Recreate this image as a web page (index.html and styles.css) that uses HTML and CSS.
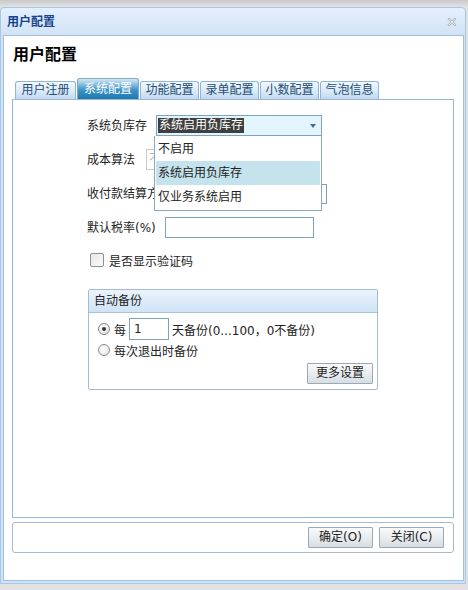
FILE: index.html
```html
<!DOCTYPE html>
<html lang="zh-CN">
<head>
<meta charset="utf-8">
<title>用户配置</title>
<link rel="stylesheet" href="styles.css">
</head>
<body>
<div class="window">
  <div class="titlebar">
    <span class="title">用户配置</span>
    <svg class="close" width="10" height="10" viewBox="0 0 10 10">
      <path d="M1 2.2 L2.2 1 L5 3.8 L7.8 1 L9 2.2 L6.2 5 L9 7.8 L7.8 9 L5 6.2 L2.2 9 L1 7.8 L3.8 5 Z" fill="#e4e8ec" stroke="#9aa3ab" stroke-width="0.8" stroke-linejoin="round"/>
    </svg>
  </div>
  <div class="body">
    <h1 class="heading">用户配置</h1>
    <div class="tabs">
      <div class="tab">用户注册</div>
      <div class="tab active">系统配置</div>
      <div class="tab">功能配置</div>
      <div class="tab">录单配置</div>
      <div class="tab">小数配置</div>
      <div class="tab">气泡信息</div>
    </div>
    <div class="panel">
      <div class="row r1">
        <span class="lbl">系统负库存</span>
        <div class="select">
          <span class="sel-text">系统启用负库存</span>
          <span class="arrow"></span>
          <div class="dropdown">
            <div class="opt">不启用</div>
            <div class="opt hl">系统启用负库存</div>
            <div class="opt">仅业务系统启用</div>
          </div>
        </div>
      </div>
      <div class="row r2">
        <span class="lbl">成本算法</span>
        <div class="input disabled">不启用</div>
      </div>
      <div class="row r3">
        <span class="lbl">收付款结算方式</span>
        <div class="input wide3"></div>
      </div>
      <div class="row r4">
        <span class="lbl">默认税率(%)</span>
        <div class="input tax"></div>
      </div>
      <div class="check-row">
        <span class="checkbox"></span>
        <span>是否显示验证码</span>
      </div>
      <div class="fieldset">
        <div class="fs-head">自动备份</div>
        <div class="fs-body">
          <div class="radio-row">
            <span class="radio on"></span>
            <span>每</span>
            <div class="input days">1</div>
            <span>天备份(0...100，0不备份)</span>
          </div>
          <div class="radio-row">
            <span class="radio"></span>
            <span>每次退出时备份</span>
          </div>
          <div class="fs-actions">
            <button class="btn">更多设置</button>
          </div>
        </div>
      </div>
    </div>
    <div class="footer">
      <button class="btn wbtn">确定(O)</button>
      <button class="btn wbtn">关闭(C)</button>
    </div>
  </div>
</div>
</body>
</html>
```
FILE: styles.css
```css
html, body {
  margin: 0;
  padding: 0;
}
body {
  width: 468px;
  height: 590px;
  overflow: hidden;
  background: linear-gradient(#c9c9c9 0px, #e2e2e2 7px, #e2e2e2 100%);
  font-family: "DejaVu Sans", "Noto Sans CJK SC", sans-serif;
  font-size: 12px;
  color: #222;
  padding-top: 7px;
  box-sizing: border-box;
}
.window {
  width: 466px;
  height: 577px;
  box-sizing: border-box;
  border: 1px solid #a9c6e6;
  border-radius: 4px 4px 0 0;
  background: linear-gradient(#e4effc 0px, #d2e3f6 27px, #cfe1f5 100%);
  padding: 0 1px 2px 2px;
  display: flex;
  flex-direction: column;
}
.titlebar {
  height: 27px;
  flex: none;
  display: flex;
  align-items: center;
  justify-content: space-between;
  padding: 0 7px 0 4px;
}
.title {
  color: #15428b;
  font-weight: bold;
  font-size: 12px;
  line-height: 14px;
}
.close {
  display: block;
  margin-top: 1px;
}
.body {
  flex: 1;
  background: #fff;
  border: 1px solid #9fc0df;
  padding: 8px 9px 0 8px;
  display: flex;
  flex-direction: column;
}
.heading {
  margin: 0 0 12px 1px;
  font-size: 16px;
  font-weight: bold;
  line-height: 22px;
  height: 22px;
  color: #000;
}
.tabs {
  display: flex;
  align-items: flex-end;
  gap: 1px;
  height: 21px;
  margin-left: 3px;
}
.tab {
  height: 18px;
  box-sizing: border-box;
  border: 1px solid #8fb6d6;
  border-bottom: none;
  border-radius: 3px 3px 0 0;
  background: linear-gradient(#f3f8fd, #dcebf7 50%, #c2d9ee);
  color: #254e78;
  line-height: 17px;
  text-align: center;
  width: 59px;
}
.tab:nth-child(1) { width: 61px; }
.tab:nth-child(2) { width: 62px; }
.tab.active {
  height: 21px;
  line-height: 20px;
  color: #fff;
  border-color: #7fa9c9;
  background: linear-gradient(#d6e8f5 0px, #8fc0e2 5px, #3d93c8 11px, #1c78b1 100%);
}
.panel {
  position: relative;
  height: 419px;
  flex: none;
  box-sizing: border-box;
  border: 1px solid #93b9d6;
  padding: 15px 0 0 74px;
}
.row {
  display: flex;
  align-items: center;
  height: 21px;
  margin-bottom: 13px;
  white-space: nowrap;
}
.lbl {
  line-height: 16px;
}
.r1 .lbl { margin-right: 9px; }
.r2 .lbl { margin-right: 11px; }
.r3 .lbl { margin-right: 6px; }
.r4 .lbl { margin-right: 9px; }
.select {
  position: relative;
  width: 166px;
  height: 21px;
  box-sizing: border-box;
  border: 1px solid #7fa3bc;
  background: #e2f5fc;
  display: flex;
  align-items: center;
  padding-left: 1px;
}
.sel-text {
  background: #3f3f3f;
  color: #fff;
  line-height: 15px;
  padding: 0 1px;
}
.arrow {
  position: absolute;
  right: 5px;
  top: 8px;
  width: 0;
  height: 0;
  border-left: 3px solid transparent;
  border-right: 3px solid transparent;
  border-top: 4px solid #3a6ea8;
}
.dropdown {
  position: absolute;
  left: -3px;
  top: 20px;
  width: 168px;
  box-sizing: border-box;
  border: 1px solid #8aa9bf;
  border-top: none;
  background: #fff;
  padding: 1px 1px 1px 1px;
  z-index: 5;
}
.opt {
  height: 24px;
  line-height: 24px;
  padding-left: 2px;
  color: #222;
}
.opt.hl {
  background: #c4e3ed;
  border-radius: 1px;
}
.input {
  height: 21px;
  box-sizing: border-box;
  border: 1px solid #7f9db9;
  background: #fff;
  line-height: 19px;
  padding-left: 4px;
}
.input.disabled {
  width: 160px;
  border-color: #c9c9c9;
  color: #b0b0b0;
  padding-left: 2px;
}
.input.wide3 {
  width: 150px;
  height: 20px;
}
.input.tax {
  width: 149px;
  border-color: #7fa3bc;
}
.check-row {
  display: flex;
  align-items: center;
  gap: 5px;
  margin: 15px 0 0 3px;
  height: 14px;
}
.checkbox {
  width: 14px;
  height: 14px;
  box-sizing: border-box;
  border: 1px solid #8e8f8f;
  border-radius: 2px;
  background: linear-gradient(135deg, #e6e6e6, #fbfbfb);
}
.fieldset {
  margin: 22px 0 0 1px;
  width: 290px;
  height: 101px;
  box-sizing: border-box;
  border: 1px solid #a5bacd;
  border-radius: 2px;
  display: flex;
  flex-direction: column;
}
.fs-head {
  height: 22px;
  line-height: 22px;
  padding-left: 5px;
  border-bottom: 1px solid #a9c2da;
  background: linear-gradient(#eaf3fc, #d0e3f6);
  color: #222;
}
.fs-body {
  padding: 5px 4px 0 9px;
}
.radio-row {
  display: flex;
  align-items: center;
  height: 22px;
  white-space: nowrap;
}
.radio-row + .radio-row {
  height: 20px;
}
.radio {
  width: 12px;
  height: 12px;
  box-sizing: border-box;
  border: 1px solid #8b8b8b;
  border-radius: 50%;
  background: radial-gradient(circle at 40% 40%, #fff, #dcdcdc);
  margin-right: 4px;
  position: relative;
}
.radio.on::after {
  content: "";
  position: absolute;
  left: 3px;
  top: 3px;
  width: 4px;
  height: 4px;
  border-radius: 50%;
  background: #333;
}
.input.days {
  width: 40px;
  height: 22px;
  line-height: 20px;
  margin: 0 3px 0 3px;
  border-color: #7fa3bc;
}
.fs-actions {
  display: flex;
  justify-content: flex-end;
  margin-top: 3px;
}
.btn {
  font-family: "DejaVu Sans", "Noto Sans CJK SC", sans-serif;
  font-size: 12px;
  color: #222;
  height: 21px;
  width: 66px;
  padding: 0;
  box-sizing: border-box;
  border: 1px solid #9ba8b5;
  border-radius: 1px;
  background: linear-gradient(#f9fafb, #e9edf0 50%, #d6dde3);
  line-height: 19px;
}
.footer {
  margin-top: 4px;
  height: 31px;
  box-sizing: border-box;
  border: 1px solid #a9b9c7;
  border-radius: 3px;
  display: flex;
  justify-content: flex-end;
  align-items: flex-start;
  gap: 6px;
  padding: 4px 9px 0 0;
}
.wbtn {
  width: 65px;
}
```
